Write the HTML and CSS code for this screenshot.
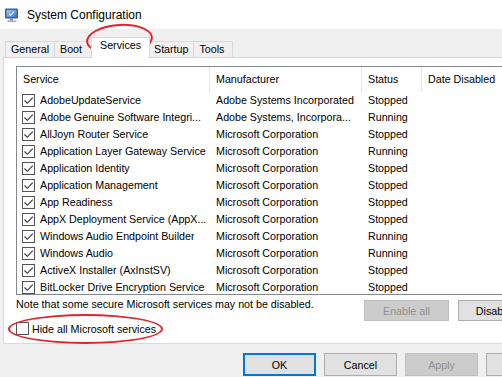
FILE: index.html
```html
<!DOCTYPE html>
<html lang="en">
<head>
    <meta charset="UTF-8">
    <title>System Configuration</title>
    <link rel="stylesheet" href="styles.css">
</head>
<body>
    <div class="window">
        <div class="titlebar">
            <svg class="app-icon" width="16" height="16" viewBox="0 0 16 16">
                <defs>
                    <linearGradient id="scr" x1="0" y1="0" x2="1" y2="1">
                        <stop offset="0" stop-color="#9fd0fa"/>
                        <stop offset="1" stop-color="#2f74d6"/>
                    </linearGradient>
                </defs>
                <rect x="1" y="1.5" width="13" height="10" rx="1" fill="#4b5b94"/>
                <rect x="2.5" y="3" width="10" height="7" fill="url(#scr)"/>
                <path d="M5 6.8l1.6 1.6L10 4.8" stroke="#fff" stroke-width="1.2" fill="none"/>
                <rect x="6" y="11.5" width="3" height="2" fill="#8c8c8c"/>
                <rect x="3.5" y="13.5" width="9" height="1.5" fill="#a8a8a8"/>
            </svg>
            <span>System Configuration</span>
        </div>

        <div class="dialog">
            <div class="tabs">
                <div class="tab">General</div>
                <div class="tab">Boot</div>
                <div class="tab active">Services</div>
                <div class="tab">Startup</div>
                <div class="tab">Tools</div>
            </div>

            <div class="panel">
                <div class="list">
                    <div class="list-head">
                        <div class="head-cell">Service</div>
                        <div class="head-cell">Manufacturer</div>
                        <div class="head-cell">Status</div>
                        <div class="head-cell">Date Disabled</div>
                    </div>

                    <div class="row">
                        <div class="cell cell-name"><span class="check checked"></span><span class="name">AdobeUpdateService</span></div>
                        <div class="cell">Adobe Systems Incorporated</div>
                        <div class="cell">Stopped</div>
                        <div class="cell"></div>
                    </div>
                    <div class="row">
                        <div class="cell cell-name"><span class="check checked"></span><span class="name">Adobe Genuine Software Integri...</span></div>
                        <div class="cell">Adobe Systems, Incorpora...</div>
                        <div class="cell">Running</div>
                        <div class="cell"></div>
                    </div>
                    <div class="row">
                        <div class="cell cell-name"><span class="check checked"></span><span class="name">AllJoyn Router Service</span></div>
                        <div class="cell">Microsoft Corporation</div>
                        <div class="cell">Stopped</div>
                        <div class="cell"></div>
                    </div>
                    <div class="row">
                        <div class="cell cell-name"><span class="check checked"></span><span class="name">Application Layer Gateway Service</span></div>
                        <div class="cell">Microsoft Corporation</div>
                        <div class="cell">Running</div>
                        <div class="cell"></div>
                    </div>
                    <div class="row">
                        <div class="cell cell-name"><span class="check checked"></span><span class="name">Application Identity</span></div>
                        <div class="cell">Microsoft Corporation</div>
                        <div class="cell">Stopped</div>
                        <div class="cell"></div>
                    </div>
                    <div class="row">
                        <div class="cell cell-name"><span class="check checked"></span><span class="name">Application Management</span></div>
                        <div class="cell">Microsoft Corporation</div>
                        <div class="cell">Stopped</div>
                        <div class="cell"></div>
                    </div>
                    <div class="row">
                        <div class="cell cell-name"><span class="check checked"></span><span class="name">App Readiness</span></div>
                        <div class="cell">Microsoft Corporation</div>
                        <div class="cell">Stopped</div>
                        <div class="cell"></div>
                    </div>
                    <div class="row">
                        <div class="cell cell-name"><span class="check checked"></span><span class="name">AppX Deployment Service (AppX...</span></div>
                        <div class="cell">Microsoft Corporation</div>
                        <div class="cell">Stopped</div>
                        <div class="cell"></div>
                    </div>
                    <div class="row">
                        <div class="cell cell-name"><span class="check checked"></span><span class="name">Windows Audio Endpoint Builder</span></div>
                        <div class="cell">Microsoft Corporation</div>
                        <div class="cell">Running</div>
                        <div class="cell"></div>
                    </div>
                    <div class="row">
                        <div class="cell cell-name"><span class="check checked"></span><span class="name">Windows Audio</span></div>
                        <div class="cell">Microsoft Corporation</div>
                        <div class="cell">Running</div>
                        <div class="cell"></div>
                    </div>
                    <div class="row">
                        <div class="cell cell-name"><span class="check checked"></span><span class="name">ActiveX Installer (AxInstSV)</span></div>
                        <div class="cell">Microsoft Corporation</div>
                        <div class="cell">Stopped</div>
                        <div class="cell"></div>
                    </div>
                    <div class="row">
                        <div class="cell cell-name"><span class="check checked"></span><span class="name">BitLocker Drive Encryption Service</span></div>
                        <div class="cell">Microsoft Corporation</div>
                        <div class="cell">Stopped</div>
                        <div class="cell"></div>
                    </div>
                </div>

                <div class="list-foot">
                    <p class="note">Note that some secure Microsoft services may not be disabled.</p>
                    <div class="foot-buttons">
                        <button class="btn btn-wide" disabled>Enable all</button>
                        <button class="btn btn-wide">Disable all</button>
                    </div>
                </div>

                <label class="hide-ms"><span class="check"></span>Hide all Microsoft services</label>
            </div>

            <div class="actions">
                <button class="btn btn-default">OK</button>
                <button class="btn">Cancel</button>
                <button class="btn" disabled>Apply</button>
                <button class="btn">Help</button>
            </div>
        </div>

        <!-- red marker circles drawn over the dialog -->
        <div class="mark mark-tab"></div>
        <div class="mark mark-hide"></div>
    </div>
</body>
</html>
```

FILE: styles.css
```css
html, body {
    margin: 0;
    overflow: hidden;
}
body {
    width: 502px;
    height: 377px;
    font-family: "Liberation Sans", Arial, sans-serif;
    font-size: 10.7px;
    color: #000;
}
.window {
    position: relative;
    width: 568px;
    height: 377px;
    overflow: hidden;
    background: #f0f0f0;
}
.titlebar {
    height: 29px;
    background: #fff;
    display: flex;
    align-items: center;
    gap: 7px;
    padding-left: 4px;
    font-size: 12px;
}
.app-icon {
    flex: none;
}
.dialog {
    height: 348px;
}
.tabs {
    display: flex;
    align-items: flex-end;
    height: 28px;
    padding-left: 5px;
    box-sizing: border-box;
}
.tab {
    min-width: 40px;
    height: 16px;
    line-height: 14px;
    box-sizing: border-box;
    border: 1px solid #d9d9d9;
    border-bottom: none;
    padding: 0 5px;
    margin-right: -1px;
    background: #f0f0f0;
}
.tab.active {
    position: relative;
    z-index: 1;
    height: 21px;
    line-height: 14px;
    margin: 0 -2px -1px -2px;
    padding: 0 8px;
    background: #fff;
}
.panel {
    margin-left: 3px;
    width: 553px;
    height: 287px;
    box-sizing: border-box;
    border: 1px solid #d9d9d9;
    background: #fff;
    padding: 8px 12px 0;
}
.list {
    height: 229px;
    box-sizing: border-box;
    border: 1px solid #828790;
    overflow: hidden;
}
.list-head, .row {
    display: grid;
    grid-template-columns: 193px 152px 60px 1fr;
}
.head-cell {
    height: 25px;
    line-height: 25px;
    padding-left: 6px;
    border-right: 1px solid #e5e5e5;
}
.row {
    height: 17px;
    line-height: 17px;
}
.cell {
    padding-left: 6px;
    white-space: nowrap;
    overflow: hidden;
    text-overflow: ellipsis;
}
.cell-name {
    display: flex;
    align-items: center;
    gap: 5px;
    padding-left: 5px;
}
.name {
    min-width: 0;
    overflow: hidden;
    text-overflow: ellipsis;
}
.check {
    flex: none;
    width: 13px;
    height: 13px;
    box-sizing: border-box;
    border: 1px solid #555;
    background: #fff;
}
.check.checked {
    background: #fff url("data:image/svg+xml,%3Csvg xmlns='http://www.w3.org/2000/svg' width='11' height='11'%3E%3Cpath d='M1.5 5.5l2.8 2.8L9.8 2.6' stroke='%23333' stroke-width='1.1' fill='none'/%3E%3C/svg%3E") no-repeat center;
}
.list-foot {
    display: flex;
    justify-content: space-between;
    align-items: flex-start;
    margin-top: 2px;
}
.note {
    margin: 0;
    line-height: 15px;
}
.foot-buttons {
    display: flex;
    gap: 9px;
    margin-top: 3px;
}
.btn {
    font: inherit;
    color: #000;
    background: #e1e1e1;
    border: 1px solid #adadad;
    width: 73px;
    height: 23px;
    padding: 0;
    box-sizing: border-box;
}
.btn-wide {
    width: 85px;
    height: 21px;
}
.btn:disabled {
    background: #cccccc;
    border-color: #bfbfbf;
    color: #8f8f8f;
}
.btn-default {
    border: 2px solid #0078d7;
}
.hide-ms {
    display: flex;
    align-items: center;
    gap: 3px;
    height: 13px;
    margin-top: 1px;
}
.actions {
    display: flex;
    justify-content: flex-end;
    gap: 8px;
    padding: 9px 9px 0 0;
}
.mark {
    position: absolute;
    box-sizing: border-box;
    border: 2.5px solid #e3242b;
    border-radius: 50%;
    pointer-events: none;
}
.mark-tab {
    left: 86px;
    top: 24px;
    width: 67px;
    height: 31px;
    transform: rotate(-4deg);
}
.mark-hide {
    left: 8px;
    top: 314px;
    width: 155px;
    height: 30px;
}
```
